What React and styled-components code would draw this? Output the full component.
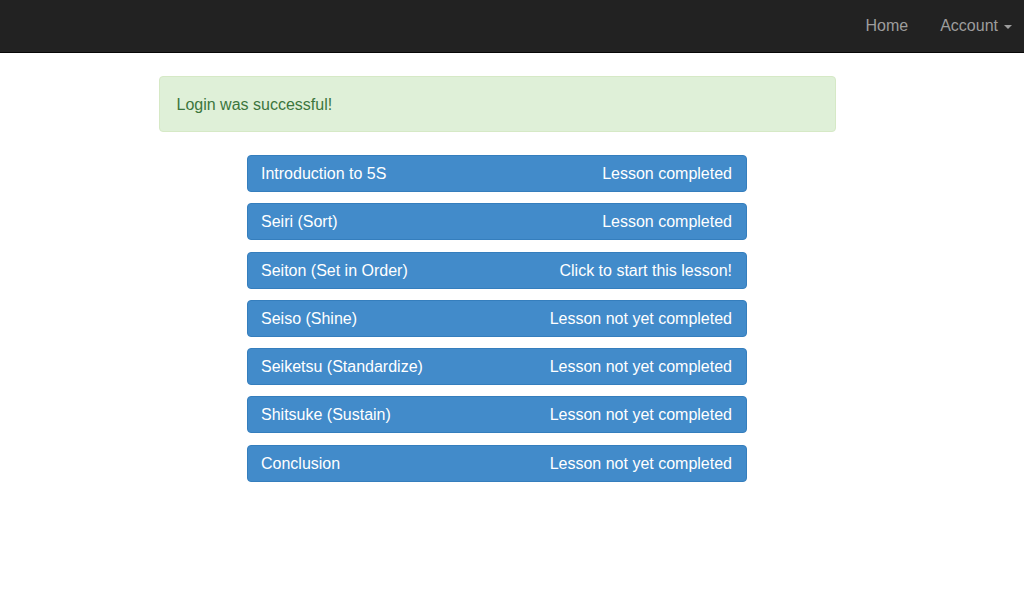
import styled, { createGlobalStyle } from "styled-components";

const GlobalStyle = createGlobalStyle`
  body {
    margin: 0;
    background: #fff;
    font-family: "Liberation Sans", Arial, Helvetica, sans-serif;
    font-size: 16px;
  }
`;

const Navbar = styled.nav`
  height: 52px;
  background: #222;
  border-bottom: 1px solid #080808;
  display: flex;
  justify-content: flex-end;
  align-items: center;
`;

const NavLink = styled.a`
  color: #9d9d9d;
  font-size: 16px;
  padding: 0 16px;
  text-decoration: none;
  display: flex;
  align-items: center;
  gap: 6px;

  &:last-child {
    padding-right: 12px;
  }
`;

const Caret = styled.span`
  width: 0;
  height: 0;
  border-left: 4px solid transparent;
  border-right: 4px solid transparent;
  border-top: 4px solid #9d9d9d;
  margin-top: 2px;
`;

const Main = styled.main`
  padding: 23px 30px 0 0;
  display: flex;
  flex-direction: column;
  align-items: center;
`;

const Alert = styled.div`
  box-sizing: border-box;
  width: 677px;
  height: 56px;
  background: #dff0d8;
  border: 1px solid #d6e9c6;
  border-radius: 4px;
  color: #3c763d;
  display: flex;
  align-items: center;
  padding: 1px 17px 0;
  margin-bottom: 23px;
`;

const LessonList = styled.div`
  display: flex;
  flex-direction: column;
  gap: 11.3px;
  width: 500px;
`;

const Lesson = styled.a`
  box-sizing: border-box;
  height: 37px;
  background: #428bca;
  border: 1px solid #357ebd;
  border-radius: 4px;
  color: #fff;
  display: flex;
  justify-content: space-between;
  align-items: center;
  padding: 1px 14px 0 13px;
  text-decoration: none;
`;

const lessons = [
  ["Introduction to 5S", "Lesson completed"],
  ["Seiri (Sort)", "Lesson completed"],
  ["Seiton (Set in Order)", "Click to start this lesson!"],
  ["Seiso (Shine)", "Lesson not yet completed"],
  ["Seiketsu (Standardize)", "Lesson not yet completed"],
  ["Shitsuke (Sustain)", "Lesson not yet completed"],
  ["Conclusion", "Lesson not yet completed"],
];

const App = () => {
  return (
    <>
      <GlobalStyle />
      <Navbar>
        <NavLink>Home</NavLink>
        <NavLink>
          Account <Caret />
        </NavLink>
      </Navbar>
      <Main>
        <Alert>Login was successful!</Alert>
        <LessonList>
          {lessons.map(([title, status]) => (
            <Lesson key={title}>
              <span>{title}</span>
              <span>{status}</span>
            </Lesson>
          ))}
        </LessonList>
      </Main>
    </>
  );
};

export default App;
